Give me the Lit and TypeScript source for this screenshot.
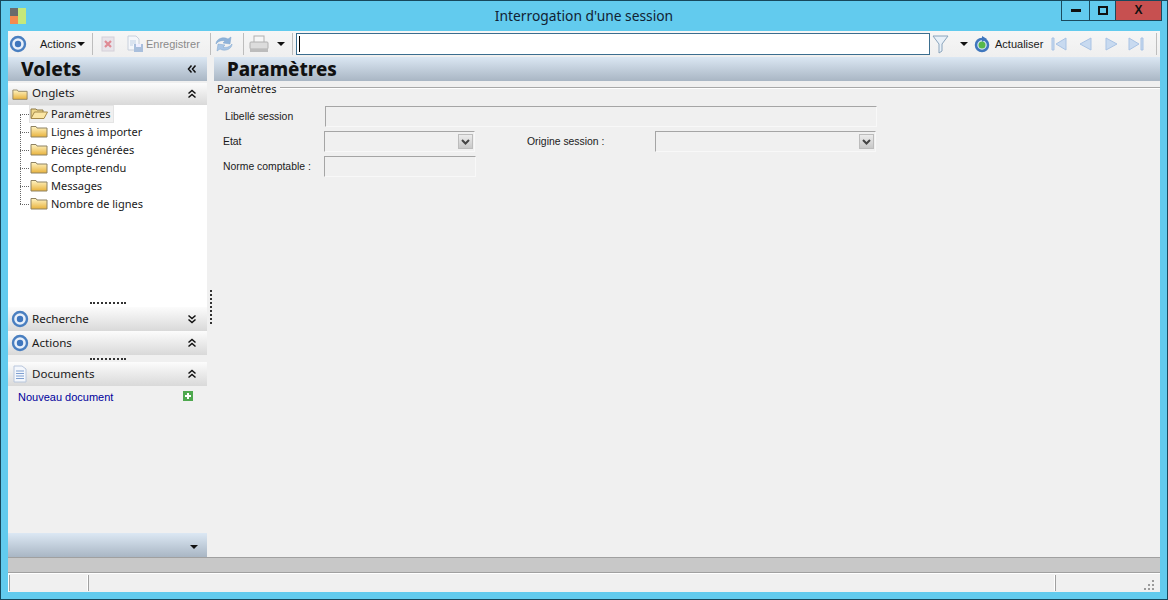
import { LitElement, html, css, svg } from "lit";
import { customElement } from "lit/decorators.js";

const target = () => svg`<svg width="18" height="18" viewBox="0 0 18 18"><circle cx="9" cy="9" r="7" fill="#e8f0fa" stroke="#4a7fc0" stroke-width="2.400"/><circle cx="9" cy="9" r="3.200" fill="#3f76bd"/></svg>`;
const folder = (open = false) => open
  ? svg`<svg width="18" height="14" viewBox="0 0 18 14"><path d="M1 12V3h5l1 1h6v2" fill="#f0d88c" stroke="#8e7a48"/><path d="M1 12.500 4.500 6h13L14 12.500z" fill="#fbe6a4" stroke="#a68a4a"/></svg>`
  : svg`<svg width="18" height="14" viewBox="0 0 18 14"><defs><linearGradient id="fg" x1="0" y1="0" x2="0" y2="1"><stop offset="0" stop-color="#fff4c4"/><stop offset="1" stop-color="#e8b23c"/></linearGradient></defs><path d="M1 13V2.500h5l1 1.500h10v9z" fill="url(#fg)" stroke="#8e8262"/></svg>`;
const dblUp = () => svg`<svg width="10" height="10" viewBox="0 0 10 10"><path d="M1.500 4.500 5 1.500l3.500 3M1.500 8.500 5 5.500l3.500 3" fill="none" stroke="#111" stroke-width="1.500"/></svg>`;
const dblDown = () => svg`<svg width="10" height="10" viewBox="0 0 10 10"><path d="M1.500 1.500 5 4.500l3.500-3M1.500 5.500 5 8.500l3.500-3" fill="none" stroke="#111" stroke-width="1.500"/></svg>`;
const caret = () => svg`<svg width="8" height="4" viewBox="0 0 8 4"><path d="M0 0h8L4 4z" fill="#111"/></svg>`;
const navArrow = (d: string) => svg`<svg width="18" height="16" viewBox="0 0 18 16"><path d="${d}" fill="#c8daf0" stroke="#a9c3e4"/></svg>`;
const ddIcon = () => svg`<svg width="9" height="6"><path d="M1 1l3.500 3.500L8 1" fill="none" stroke="#444" stroke-width="2"/></svg>`;

@customElement("app-root")
export class AppRoot extends LitElement {
  static styles = css`
    :host { display: block; font-family: "Noto Sans", sans-serif; font-size: 11px; color: #1a1a1a; }
    .win { width: 1168px; height: 600px; box-sizing: border-box; background: #62cbee; border: 1px solid #17485c; display: flex; flex-direction: column; overflow: hidden; }
    .title { height: 30px; flex: none; display: grid; grid-template-columns: 1fr auto 1fr; }
    .logo { margin: 7px 0 0 9px; width: 16px; height: 16px; display: grid; grid-template-columns: 8px 8px; grid-template-rows: 8px 8px; }
    .title-text { font-size: 13.800px; line-height: 17px; padding-top: 6px; color: #123; }
    .wbtns { display: flex; height: 21px; margin-right: 5px; justify-self: end; margin-top: -1px; }
    .wb { box-sizing: border-box; height: 21px; border: 1px solid #1a4a5e; border-top: none; border-left: none; display: flex; align-items: center; justify-content: center; }
    .wb.min { width: 29px; border-left: 1px solid #1a4a5e; }
    .wb.max { width: 26px; }
    .wb.close { width: 46px; background: #c75050; color: #111; font: bold 12px "Liberation Sans", sans-serif; }
    .client { margin: 0 7px 7px; flex: 1; display: flex; flex-direction: column; background: #f0f0f0; min-height: 0; }
    .toolbar { height: 26px; flex: none; display: flex; align-items: center; background: linear-gradient(#f6f6f6, #efefef); box-sizing: border-box; font-family: "Liberation Sans", sans-serif; }
    .sep { width: 1px; height: 22px; background: #bdbdbd; }
    .tb-dis { color: #8a8a8a; }
    .search { width: 634px; height: 22px; box-sizing: border-box; border: 1px solid #3b6e8f; background: #fff; display: flex; align-items: center; padding-left: 2px; }
    .cursor { width: 1px; height: 16px; background: #000; }
    .body { flex: 1; display: flex; min-height: 0; }
    .side { width: 199px; flex: none; display: flex; flex-direction: column; }
    .hdr { height: 24px; flex: none; background: linear-gradient(#dbe7f3, #a9b6c4); display: flex; align-items: center; justify-content: space-between; box-sizing: border-box; }
    .hdr .big { font-weight: 800; font-size: 19px; line-height: 24px; color: #111; }
    .main .hdr .big { font-size: 18.700px; }
    .side .hdr { padding: 0 10px 0 13px; }
    .sec { height: 24px; flex: none; box-sizing: border-box; display: flex; align-items: center; background: linear-gradient(#fcfcfc, #d9d9d9); padding: 0 10px 0 4px; gap: 4px; font-size: 11.600px; }
    .sec.short { height: 22px; }
    .sec .ib { padding-bottom: 1px; width: 16px; justify-content: center; }
    .sec .ib svg { flex: none; }
    .sec.short .ib svg { width: 16px; height: 14px; }
    .sec .lbl { flex: 1; padding-bottom: 2px; }
    .sec.short .lbl { padding-bottom: 4px; }
    .sp1 { height: 2px; flex: none; background: #f0f0f0; }
    .tree { height: 193px; flex: none; background: #fff; padding-left: 21px; box-sizing: border-box; }
    .row { height: 18px; box-sizing: border-box; display: flex; align-items: center; gap: 3px; position: relative; width: max-content; padding: 0 3px 2px 1px; }
    .row::before { content: ""; position: absolute; left: -9px; top: 9px; width: 9px; border-top: 1px dotted #666; }
    .row::after { content: ""; position: absolute; left: -9px; top: -9px; height: 18px; border-left: 1px dotted #666; }
    .row:first-child::after { display: none; }
    .row.sel { background: #f0f0f0; box-shadow: inset 0 0 0 1px #e4e4e4; }
    .grip { height: 9px; flex: none; background: #fff; display: flex; justify-content: center; align-items: center; }
    .grip.g2 { height: 7px; background: #f0f0f0; }
    .dots { width: 36px; border-top: 2px dotted #333; }
    .docs { flex: 1; background: #f0f0f0; padding: 3px 14px 0 10px; display: flex; justify-content: space-between; align-items: flex-start; color: #00009c; line-height: 16px; font-family: "Liberation Sans", sans-serif; }
    .splitter { width: 7px; flex: none; padding-top: 233px; box-sizing: border-box; }
    .vdots { height: 34px; border-left: 2px dotted #333; margin-left: 3px; }
    .main { flex: 1; min-width: 0; display: flex; flex-direction: column; }
    .main .hdr { padding-left: 13px; }
    .fs { padding: 0 0 0 3px; }
    .legend { display: flex; align-items: center; gap: 3px; height: 14px; margin-bottom: 9px; }
    .legend i { flex: 1; border-top: 1px solid #a8a8a8; border-bottom: 1px solid #fff; }
    .frow { display: flex; align-items: center; height: 25px; font-family: "Liberation Sans", sans-serif; font-size: 10.400px; white-space: nowrap; }
    .field { box-sizing: border-box; height: 21px; border: 1px solid; border-color: #a5a5a5 #f8f8f8 #f8f8f8 #a5a5a5; background: #f0f0f0; display: flex; align-items: center; justify-content: flex-end; padding-right: 1px; }
    .l1 { width: 100px; padding-left: 8px; }
    .l2 { width: 101px; padding-left: 6px; }
    .l3 { margin-left: 52px; width: 128px; }
    .dd { width: 15px; height: 15px; background: linear-gradient(#ececec,#c8c8c8); border: 1px solid #bcbcbc; box-sizing: border-box; display: flex; align-items: center; justify-content: center; }
    .bar { height: 14px; flex: none; background: #c8c8c8; border-top: 1px solid #a0a0a0; border-bottom: 1px solid #a0a0a0; }
    .status { height: 19px; flex: none; display: flex; background: #f0f0f0; border-top: 1px solid #fff; border-left: 1px solid #fff; box-sizing: border-box; padding: 1px 0 1px 0; }
    .status div { border-left: 1px solid #a0a0a0; border-right: 1px solid #fff; box-sizing: border-box; }
    .status .grip-r { flex: 1; border-right: none; display: flex; justify-content: flex-end; align-items: flex-end; padding: 0 5px 0 0; }
    .footer { height: 24px; flex: none; background: linear-gradient(#dce8f4, #a9b6c4); display: flex; align-items: center; justify-content: flex-end; padding: 3px 9px 0 0; box-sizing: border-box; }
    .ib { display: flex; align-items: center; }
  `;

  render() {
    const items = ["Lignes à importer", "Pièces générées", "Compte-rendu", "Messages", "Nombre de lignes"];
    return html`<div class="win">
      <div class="title">
        <div class="logo"><span style="background:#6b6b6b"></span><span style="background:#c5e87a;grid-row:span 2"></span><span style="background:#f58a4e"></span></div>
        <div class="title-text">Interrogation d'une session</div>
        <div class="wbtns">
          <div class="wb min"><svg width="10" height="3"><rect width="10" height="3" fill="#111"/></svg></div>
          <div class="wb max"><svg width="10" height="9"><rect x="1" y="1" width="8" height="7" fill="none" stroke="#111" stroke-width="2"/></svg></div>
          <div class="wb close">X</div>
        </div>
      </div>
      <div class="client">
        <div class="toolbar">
          <span class="ib" style="margin-left:1px">${target()}</span>
          <span style="margin-left:13px;width:36px">Actions</span><span class="ib" style="margin:0 7px 0 1px">${caret()}</span>
          <div class="sep"></div>
          <span class="ib" style="margin-left:7px"><svg width="16" height="16" viewBox="0 0 16 16"><rect x="2" y="1" width="12" height="14" fill="#e8e4ea" stroke="#d4d0d8"/><path d="M5 5l6 6M11 5l-6 6" stroke="#df8a94" stroke-width="2.200"/></svg></span>
          <span class="ib" style="margin-left:10px"><svg width="18" height="18" viewBox="0 0 18 18"><path d="M2 1h8l3 3v11H2z" fill="#f4f6fa" stroke="#c8d0dc"/><path d="M4 6h6M4 8h6M4 10h3" stroke="#c0d0e4"/><rect x="8" y="9" width="9" height="8" fill="#a9bfdc"/><rect x="10" y="9" width="5" height="3" fill="#eef"/></svg></span>
          <span class="tb-dis" style="margin-left:2px;width:64px">Enregistrer</span>
          <div class="sep"></div>
          <span class="ib" style="margin-left:4px"><svg width="18" height="18" viewBox="0 0 18 18"><path d="M1 9c0-5 7-8 12-5l3-2-1 7-7-1 2-2C7 5 3 6 1 9z" fill="#8fb3da" stroke="#7fa4cc" stroke-width=".5"/><path d="M17 9c0 5-7 8-12 5l-3 2 1-7 7 1-2 2c3 1 7 0 9-3z" fill="#a9c6e6" stroke="#7fa4cc" stroke-width=".5"/></svg></span>
          <div class="sep" style="margin-left:10px"></div>
          <span class="ib" style="margin-left:5px"><svg width="20" height="18" viewBox="0 0 20 18"><rect x="5" y="1" width="10" height="7" fill="#f6f6f6" stroke="#b0b0b0"/><rect x="1" y="7" width="18" height="7" rx="1" fill="#dcdcdc" stroke="#b0b0b0"/><rect x="1" y="14" width="18" height="3" fill="#bcbcbc"/></svg></span>
          <span class="ib" style="margin-left:8px">${caret()}</span>
          <div class="sep" style="margin-left:7px"></div>
          <div class="search" style="margin-left:3px"><div class="cursor"></div></div>
          <span class="ib" style="margin-left:2px"><svg width="18" height="20" viewBox="0 0 18 20"><path d="M1 2h15L10 10v7l-3 2v-9z" fill="#e8f0f8" stroke="#8aa4bc"/></svg></span>
          <span class="ib" style="margin-left:10px">${caret()}</span>
          <span class="ib" style="margin-left:5px"><svg width="18" height="18" viewBox="0 0 18 18"><circle cx="9" cy="10" r="6" fill="#d8e8f4" stroke="#3f76bd" stroke-width="2.500"/><path d="M9 1l5 3-5 3z" fill="#3f76bd"/><circle cx="9" cy="10" r="3.500" fill="#56b84a"/></svg></span>
          <span style="margin-left:4px;width:48px">Actualiser</span>
          <span class="ib" style="margin-left:7px">${navArrow("M2 2h2v12H2zM16 2v12L6 8z")}</span>
          <span class="ib" style="margin-left:9px">${navArrow("M14 2v12L3 8z")}</span>
          <span class="ib" style="margin-left:7px">${navArrow("M4 2v12l11-6z")}</span>
          <span class="ib" style="margin-left:7px">${navArrow("M2 2v12l10-6zM14 2h2v12h-2z")}</span>
          <div class="sep" style="margin-left:11px"></div>
        </div>
        <div class="body">
          <div class="side">
            <div class="hdr"><span class="big">Volets</span><svg width="10" height="10" viewBox="0 0 10 10"><path d="M4.500 1.500 1.500 5l3 3.500M8.500 1.500 5.500 5l3 3.500" fill="none" stroke="#111" stroke-width="1.500"/></svg></div>
            <div class="sp1"></div>
            <div class="sec short"><span class="ib">${folder()}</span><span class="lbl">Onglets</span>${dblUp()}</div>
            <div class="tree">
              <div class="row sel"><span class="ib">${folder(true)}</span>Paramètres</div>
              ${items.map(t => html`<div class="row"><span class="ib">${folder()}</span>${t}</div>`)}
            </div>
            <div class="grip"><div class="dots"></div></div>
            <div class="sec"><span class="ib">${target()}</span><span class="lbl">Recherche</span>${dblDown()}</div>
            <div class="sec"><span class="ib">${target()}</span><span class="lbl">Actions</span>${dblUp()}</div>
            <div class="grip g2"><div class="dots"></div></div>
            <div class="sec"><span class="ib"><svg width="18" height="18" viewBox="0 0 18 18"><path d="M3 1h8l4 3v13H3z" fill="#f4f7fc" stroke="#b8c6dc"/><path d="M5 6h8M5 8.500h8M5 11h8M5 13.500h8" stroke="#7f9fd0"/></svg></span><span class="lbl">Documents</span>${dblUp()}</div>
            <div class="docs"><span>Nouveau document</span><svg width="10" height="10" style="margin-top:2px"><rect width="10" height="10" fill="#4ea84e"/><path d="M5 2v6M2 5h6" stroke="#fff" stroke-width="2"/></svg></div>
            <div class="footer">${caret()}</div>
          </div>
          <div class="splitter"><div class="vdots"></div></div>
          <div class="main">
            <div class="hdr"><span class="big">Paramètres</span></div>
            <div class="fs">
              <div class="legend"><span>Paramètres</span><i></i></div>
              <div class="frow"><span class="l1">Libellé session</span><div class="field" style="width:552px"></div></div>
              <div class="frow"><span class="l2">Etat</span><div class="field" style="width:151px"><div class="dd">${ddIcon()}</div></div><span class="l3">Origine session :</span><div class="field" style="width:221px"><div class="dd">${ddIcon()}</div></div></div>
              <div class="frow"><span class="l2">Norme comptable :</span><div class="field" style="width:152px"></div></div>
            </div>
          </div>
        </div>
        <div class="bar"></div>
        <div class="status">
          <div style="width:79px"></div><div style="width:967px"></div>
          <div class="grip-r"><svg width="11" height="11" viewBox="0 0 11 11" fill="#9a9a9a"><rect x="8" y="0" width="2" height="2"/><rect x="4" y="4" width="2" height="2"/><rect x="8" y="4" width="2" height="2"/><rect x="0" y="8" width="2" height="2"/><rect x="4" y="8" width="2" height="2"/><rect x="8" y="8" width="2" height="2"/></svg></div>
        </div>
      </div>
    </div>`;
  }
}
